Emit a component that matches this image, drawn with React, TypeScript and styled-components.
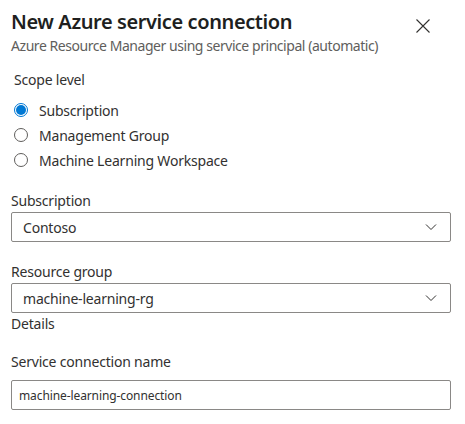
import styled, { createGlobalStyle } from "styled-components";

const GlobalStyle = createGlobalStyle`
  html, body {
    margin: 0;
    padding: 0;
    background: #ffffff;
  }
  body {
    font-family: "Noto Sans", "Open Sans", sans-serif;
    color: #323130;
  }
`;

const Panel = styled.div`
  width: 465px;
  height: 424px;
  box-sizing: border-box;
  padding: 7px 14px 0 11px;
  display: flex;
  flex-direction: column;
`;

const Header = styled.div`
  display: flex;
  justify-content: space-between;
  align-items: flex-start;
`;

const HeaderText = styled.div`
  display: flex;
  flex-direction: column;
`;

const Title = styled.h1`
  margin: 0;
  font-size: 20px;
  line-height: 30px;
  font-weight: 600;
  color: #201f1e;
  letter-spacing: -0.4px;
`;

const Subtitle = styled.div`
  font-size: 14px;
  line-height: 18px;
  color: #605e5c;
  letter-spacing: -0.45px;
`;

const CloseButton = styled.button`
  border: none;
  background: none;
  padding: 0;
  margin: 11px 20px 0 0;
  width: 16px;
  height: 16px;
  display: flex;
  cursor: pointer;
`;

const Label = styled.div<{ $indent?: number; $top: number }>`
  font-size: 14px;
  line-height: 20px;
  color: #323130;
  margin-top: ${({ $top }) => $top}px;
  padding-left: ${({ $indent }) => $indent ?? 0}px;
  letter-spacing: -0.2px;
`;

const RadioGroup = styled.div`
  display: flex;
  flex-direction: column;
  gap: 5px;
  margin-top: 10px;
  padding-left: 3px;
`;

const RadioRow = styled.label`
  display: flex;
  align-items: center;
  gap: 11px;
  height: 20px;
  font-size: 14px;
  color: #323130;
  letter-spacing: -0.2px;
`;

const RadioCircle = styled.span<{ $checked?: boolean }>`
  width: 14px;
  height: 14px;
  box-sizing: border-box;
  border-radius: 50%;
  border: 1px solid ${({ $checked }) => ($checked ? "#0078d4" : "#605e5c")};
  display: flex;
  align-items: center;
  justify-content: center;
  &::after {
    content: "";
    width: 10px;
    height: 10px;
    border-radius: 50%;
    background: ${({ $checked }) => ($checked ? "#0078d4" : "transparent")};
  }
`;

const Box = styled.div<{ $top: number }>`
  margin-top: ${({ $top }) => $top}px;
  height: 30px;
  box-sizing: border-box;
  border: 1px solid #8a8886;
  border-radius: 2px;
  display: flex;
  align-items: center;
  justify-content: space-between;
`;

const SelectValue = styled.span`
  padding-left: 11px;
  font-size: 14px;
  color: #323130;
  letter-spacing: -0.2px;
`;

const InputValue = styled.span`
  padding-left: 7px;
  font-size: 12px;
  color: #323130;
  letter-spacing: -0.1px;
`;

const Chevron = styled.svg`
  margin-right: 13px;
`;

type Option = { label: string; checked?: boolean };

const scopes: Option[] = [
  { label: "Subscription", checked: true },
  { label: "Management Group" },
  { label: "Machine Learning Workspace" },
];

const Select: React.FC<{ value: string; top: number }> = ({ value, top }) => (
  <Box $top={top}>
    <SelectValue>{value}</SelectValue>
    <Chevron width="12" height="8" viewBox="0 0 12 8">
      <path d="M1 1.5 L6 6.5 L11 1.5" fill="none" stroke="#323130" strokeWidth="1" />
    </Chevron>
  </Box>
);

export default function App() {
  return (
    <>
      <GlobalStyle />
      <Panel>
        <Header>
          <HeaderText>
            <Title>New Azure service connection</Title>
            <Subtitle>Azure Resource Manager using service principal (automatic)</Subtitle>
          </HeaderText>
          <CloseButton aria-label="Close">
            <svg width="16" height="16" viewBox="0 0 16 16">
              <path d="M1.5 1.5 L14.5 14.5 M14.5 1.5 L1.5 14.5" stroke="#323130" strokeWidth="1.1" />
            </svg>
          </CloseButton>
        </Header>

        <Label $top={15} $indent={3}>Scope level</Label>
        <RadioGroup>
          {scopes.map((s) => (
            <RadioRow key={s.label}>
              <RadioCircle $checked={s.checked} />
              {s.label}
            </RadioRow>
          ))}
        </RadioGroup>

        <Label $top={21}>Subscription</Label>
        <Select value="Contoso" top={1} />

        <Label $top={20}>Resource group</Label>
        <Select value="machine-learning-rg" top={1} />

        <Label $top={1}>Details</Label>

        <Label $top={18}>Service connection name</Label>
        <Box $top={8}>
          <InputValue>machine-learning-connection</InputValue>
        </Box>
      </Panel>
    </>
  );
}
